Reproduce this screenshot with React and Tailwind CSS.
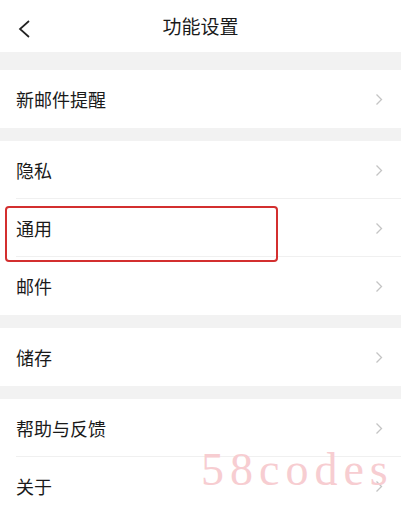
import React from "react";

const font = { fontFamily: '"Noto Sans CJK SC", "Noto Sans", sans-serif' };

const Chevron = () => (
  <svg width="8" height="13" viewBox="0 0 8 13" className="shrink-0">
    <path d="M1.5 1.5 L6.5 6.5 L1.5 11.5" fill="none" stroke="#c4c4c4" strokeWidth="1.3" />
  </svg>
);

const Row = ({ label, last, highlight }) => (
  <div className={`relative h-[58px] flex items-center justify-between pl-4 pr-[18px] bg-white ${highlight ? "z-10" : ""}`}>
    <span className="text-[18px] text-[#1a1a1a] leading-none">{label}</span>
    <Chevron />
    {!last && <div className="absolute left-4 right-0 bottom-0 h-px bg-[#f0f0f0]" />}
    {highlight && (
      <div className="absolute left-[5px] top-[7px] w-[273px] h-[56px] border-[2.5px] border-[#d32f2f] rounded-[4px]" />
    )}
  </div>
);

const Section = ({ items }) => (
  <div className="bg-white">
    {items.map((it, i) => (
      <Row key={it.label} label={it.label} highlight={it.highlight} last={i === items.length - 1} />
    ))}
  </div>
);

export default function App() {
  return (
    <div className="relative w-[401px] h-[506px] overflow-hidden bg-[#f2f2f2]" style={font}>
      {/* Header */}
      <div className="relative h-[52px] bg-white flex items-center justify-center">
        <svg width="14" height="18" viewBox="0 0 14 18" className="absolute left-[17px] top-[20px]">
          <path d="M12 1 L3 9 L12 17" fill="none" stroke="#222" strokeWidth="1.7" />
        </svg>
        <span className="text-[19px] text-[#1a1a1a]">功能设置</span>
      </div>

      <div className="flex flex-col gap-[13px] pt-[18px]">
        <Section items={[{ label: "新邮件提醒" }]} />
        <Section items={[{ label: "隐私" }, { label: "通用", highlight: true }, { label: "邮件" }]} />
        <Section items={[{ label: "储存" }]} />
        <Section items={[{ label: "帮助与反馈" }, { label: "关于" }]} />
      </div>

      {/* Watermark */}
      <div
        className="absolute z-20 left-[201px] top-[447px] text-[46px] tracking-[6px] text-[#f7cdd1] leading-none"
        style={{ fontFamily: '"Liberation Serif", "DejaVu Serif", serif' }}
      >
        58codes
      </div>
    </div>
  );
}
